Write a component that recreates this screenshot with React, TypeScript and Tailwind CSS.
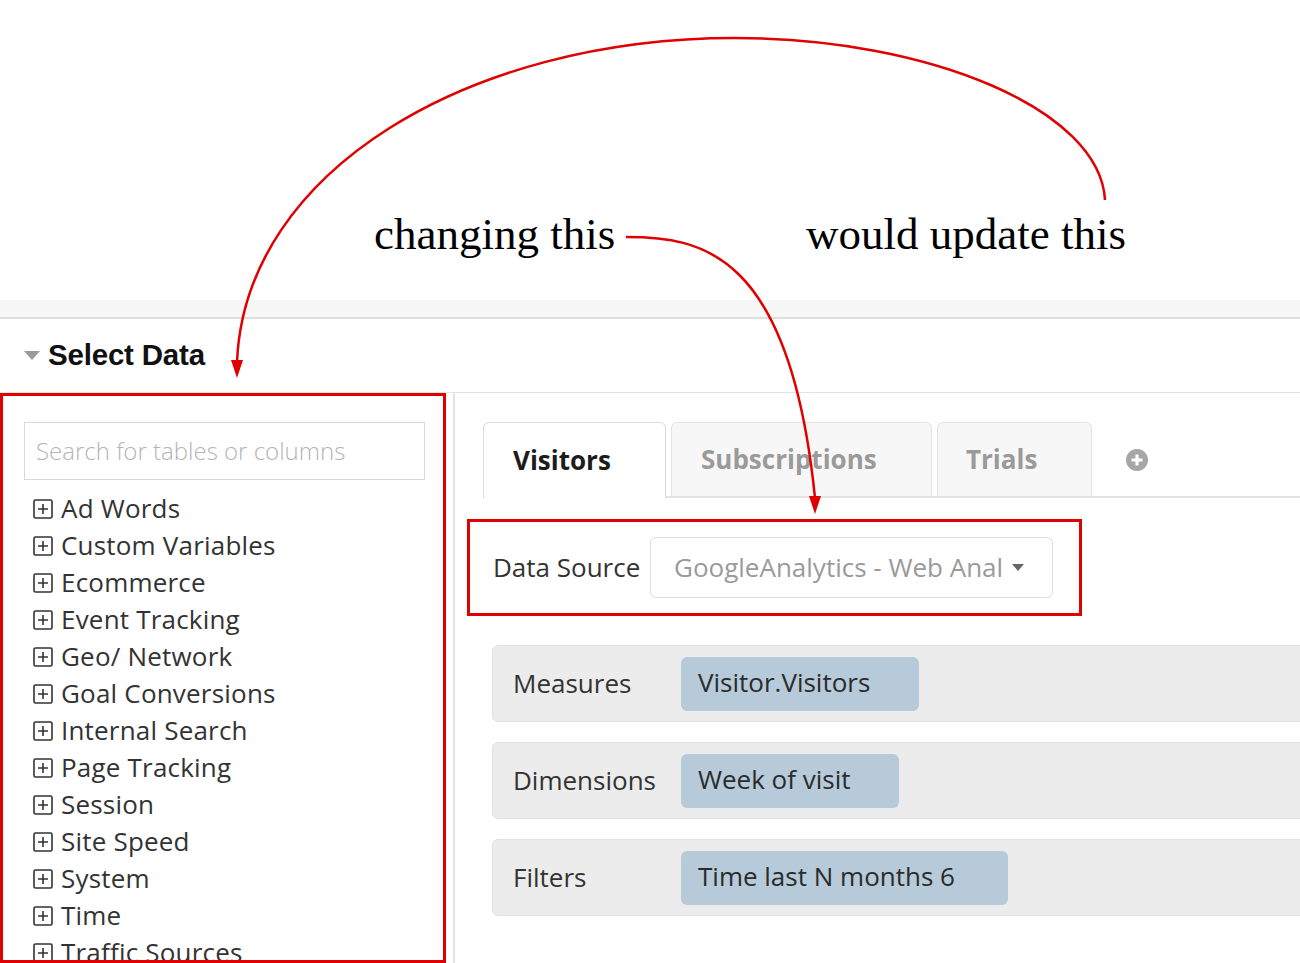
import React from 'react';

const RED = 'border-[#e00000]';

const tables = [
  'Ad Words',
  'Custom Variables',
  'Ecommerce',
  'Event Tracking',
  'Geo/ Network',
  'Goal Conversions',
  'Internal Search',
  'Page Tracking',
  'Session',
  'Site Speed',
  'System',
  'Time',
  'Traffic Sources',
];

const rows = [
  { label: 'Measures', chip: 'Visitor.Visitors', width: 'w-[238px]' },
  { label: 'Dimensions', chip: 'Week of visit', width: 'w-[218px]' },
  { label: 'Filters', chip: 'Time last N months 6', width: 'w-[327px]' },
];

const PlusBox: React.FC = () => (
  <svg width="20" height="20" viewBox="0 0 20 20" className="shrink-0">
    <rect x="1" y="1" width="18" height="18" rx="1.5" fill="none" stroke="#333" strokeWidth="1.6" />
    <path d="M10 5v10M5 10h10" stroke="#333" strokeWidth="1.6" />
  </svg>
);

const Annotations: React.FC = () => (
  <svg
    className="absolute inset-0 pointer-events-none"
    width="1300"
    height="963"
    viewBox="0 0 1300 963"
  >
    {/* long arc: would update this -> left panel */}
    <path
      d="M1105 200 C1100 110 930 38 735 38 C470 38 245 170 237 362"
      fill="none"
      stroke="#e00000"
      strokeWidth="2.5"
    />
    <path d="M231 360 L237 378 L243 360 Z" fill="#e00000" />
    {/* short arc: changing this -> data source */}
    <path
      d="M626 237 C700 237 790 250 815 498"
      fill="none"
      stroke="#e00000"
      strokeWidth="2.5"
    />
    <path d="M809 496 L815 514 L821 496 Z" fill="#e00000" />
  </svg>
);

export default function App() {
  return (
    <div className="relative w-[1300px] h-[963px] overflow-hidden bg-white font-['Open_Sans',sans-serif]">
      {/* Annotation text */}
      <div className="h-[300px] pt-[212px] pl-[374px] flex font-['Liberation_Serif',serif] text-[45px] leading-[45px] text-black">
        <span className="w-[432px]">changing this</span>
        <span>would update this</span>
      </div>

      {/* Top band */}
      <div className="h-[19px] bg-[#f7f7f7] border-b-2 border-[#dedede]" />

      {/* Section header */}
      <div className="h-[74px] flex items-center pl-[24px] gap-[8px] border-b border-[#e3e3e3]">
        <svg width="16" height="9" viewBox="0 0 16 9">
          <path d="M0 0 L16 0 L8 9 Z" fill="#9a9a9a" />
        </svg>
        <span className="font-['Liberation_Sans',sans-serif] font-bold text-[29.5px] text-[#111] tracking-[-0.2px]">
          Select Data
        </span>
      </div>

      <div className="flex h-[570px]">
        {/* Left: table tree */}
        <div className={`w-[446px] h-full border-[3px] ${RED} pl-[21px] pr-[18px] pt-[26px] overflow-hidden`}>
          <div className="h-[58px] border border-[#d9d9d9] flex items-center pl-[11px] text-[24px] font-light text-[#b5b5b5]">
            Search for tables or columns
          </div>
          <ul className="mt-[10px] pl-[9px]">
            {tables.map((t) => (
              <li key={t} className="h-[37px] flex items-center gap-[8px] text-[26px] text-[#333] tracking-[0.2px]">
                <PlusBox />
                <span>{t}</span>
              </li>
            ))}
          </ul>
        </div>

        <div className="w-[7px]" />
        <div className="w-[2px] bg-[#e3e3e3]" />

        {/* Right: query editor */}
        <div className="flex-1 overflow-hidden pt-[29px]">
          <div className="flex h-[76px] pl-[28px]">
            <div className="w-[183px] h-full bg-white border border-b-0 border-[#dcdcdc] rounded-t-[6px] flex items-center pl-[29px] text-[26px] font-bold text-[#1c1c1c]">
              Visitors
            </div>
            <div className="w-[5px] border-b-2 border-[#e3e3e3]" />
            <div className="w-[261px] h-full bg-[#f7f7f7] border border-b-2 border-[#e3e3e3] rounded-t-[6px] flex items-center pl-[29px] text-[26px] font-bold text-[#9a9a9a]">
              Subscriptions
            </div>
            <div className="w-[5px] border-b-2 border-[#e3e3e3]" />
            <div className="w-[155px] h-full bg-[#f7f7f7] border border-b-2 border-[#e3e3e3] rounded-t-[6px] flex items-center pl-[28px] text-[26px] font-bold text-[#9a9a9a]">
              Trials
            </div>
            <div className="flex-1 border-b-2 border-[#e3e3e3] flex items-center pl-[34px] pt-[2px]">
              <svg width="22" height="22" viewBox="0 0 22 22">
                <circle cx="11" cy="11" r="11" fill="#a6a6a6" />
                <path d="M11 5.5v11M5.5 11h11" stroke="#fff" strokeWidth="3.2" />
              </svg>
            </div>
          </div>

          {/* Data source */}
          <div className={`ml-[12px] mt-[21px] w-[615px] h-[97px] border-[3px] ${RED} flex items-center pl-[23px]`}>
            <span className="w-[157px] text-[26px] text-[#333]">Data Source</span>
            <div className="w-[403px] h-[61px] border border-[#dcdcdc] rounded-[6px] flex items-center pl-[23px] gap-[9px] text-[26px] text-[#9a9a9a]">
              <span>GoogleAnalytics - Web Anal</span>
              <svg width="12" height="7" viewBox="0 0 12 7">
                <path d="M0 0 L12 0 L6 7 Z" fill="#666" />
              </svg>
            </div>
          </div>

          {/* Query parts */}
          <div className="ml-[37px] mt-[29px] w-[860px] flex flex-col gap-[20px]">
            {rows.map((r) => (
              <div
                key={r.label}
                className="h-[77px] bg-[#ececec] border border-[#e2e2e2] rounded-[6px] flex items-center"
              >
                <span className="w-[188px] pl-[20px] text-[26px] text-[#333]">{r.label}</span>
                <div
                  className={`${r.width} h-[54px] bg-[#b6cad9] rounded-[6px] flex items-center pl-[17px] pb-[3px] text-[26px] text-[#2b2b2b]`}
                >
                  {r.chip}
                </div>
              </div>
            ))}
          </div>
        </div>
      </div>

      <Annotations />
    </div>
  );
}
